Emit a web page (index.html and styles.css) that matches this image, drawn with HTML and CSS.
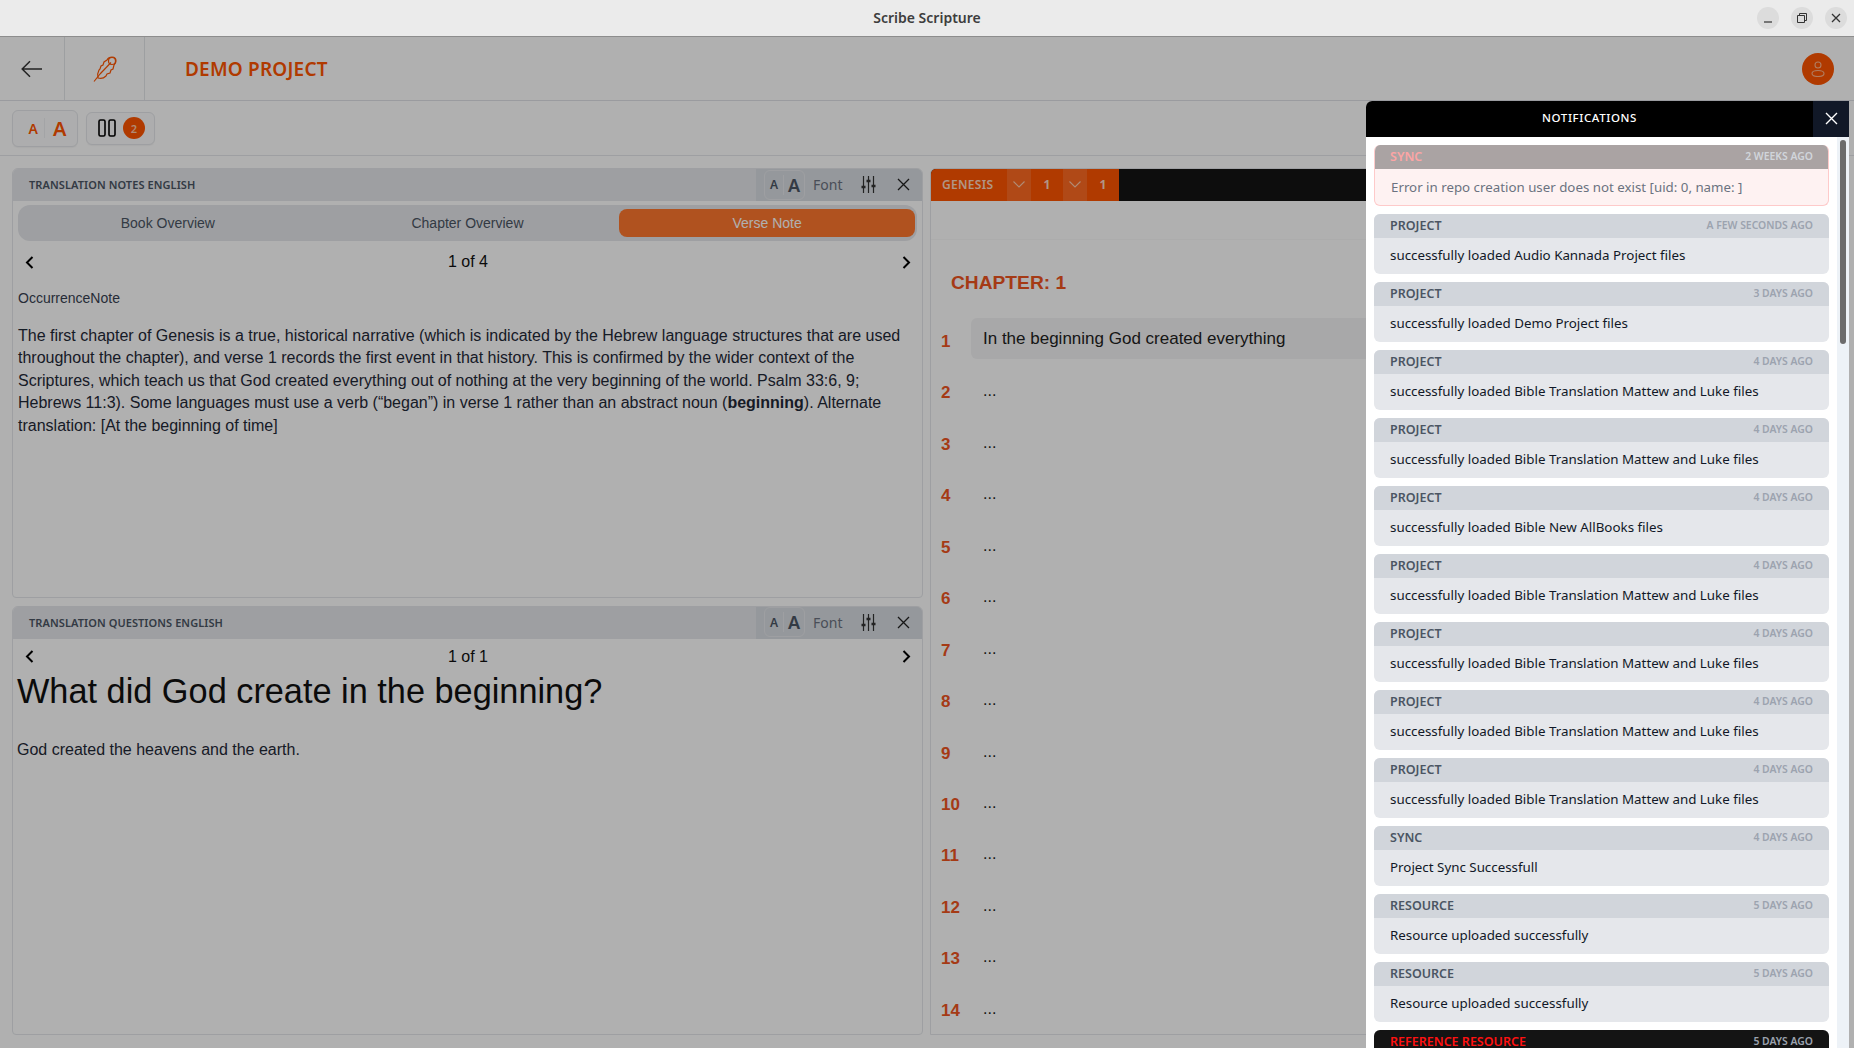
FILE: index.html
```html
<!DOCTYPE html>
<html lang="en">
<head>
<meta charset="utf-8">
<title>Scribe Scripture</title>
<link rel="stylesheet" href="styles.css">
</head>
<body>
<header class="titlebar">
  <span class="titlebar-name">Scribe Scripture</span>
  <div class="winctl">
    <span class="winbtn"><svg width="10" height="10" viewBox="0 0 10 10"><path d="M1 9h8" stroke="#333" stroke-width="1.2"/></svg></span>
    <span class="winbtn"><svg width="10" height="10" viewBox="0 0 10 10" fill="none" stroke="#333"><path d="M.5 2.5h7v7h-7z"/><path d="M2.5 2.5v-2h7v7h-2"/></svg></span>
    <span class="winbtn"><svg width="10" height="10" viewBox="0 0 10 10" stroke="#333" stroke-width="1.3"><path d="M1 1l8 8M9 1l-8 8"/></svg></span>
  </div>
</header>

<div class="app">
  <nav class="appbar">
    <div class="appcell cell-back"><svg width="22" height="18" viewBox="0 0 22 18" fill="none" stroke="#333" stroke-width="1.5"><path d="M21 9H1.5M9 1.2L1.2 9 9 16.8"/></svg></div>
    <div class="appcell cell-logo"><svg width="24" height="26" viewBox="0 0 24 26" fill="none" stroke="#ff5500" stroke-width="1.2"><path d="M1 25.5L7 18"/><path d="M5 21c-1-3 0-5 1-7l1-1 1-3 2-1 1-3 3-2c1-2 3-3 5-3 3 0 4 2 4 4 0 2-1 3-2 4l-1 4-2 1-1 3-3 1-1 2c-2 2-5 3-8 2z"/><path d="M7 18L18 6.500"/><circle cx="19" cy="5" r="3.500"/></svg></div>
    <h1 class="project-title">DEMO PROJECT</h1>
    <span class="avatar"><svg width="14" height="16" viewBox="0 0 14 16" fill="none" stroke="#ffb48a" stroke-width="1.1"><circle cx="7" cy="4" r="3"/><path d="M1 12.500C1 10.500 4 9.500 7 9.500s6 1 6 3-2 3-6 3-6-1-6-3z"/></svg></span>
  </nav>

  <div class="toolbar">
    <div class="tool-box tool-font">
      <span class="a-small">A</span><span class="tool-sep"></span><span class="a-large">A</span>
    </div>
    <div class="tool-box tool-cols">
      <svg width="18" height="18" viewBox="0 0 18 18" fill="none" stroke="#000" stroke-width="1.6"><rect x="1" y="1" width="6" height="16" rx="1.500"/><rect x="11" y="1" width="6" height="16" rx="1.500"/></svg>
      <span class="badge">2</span>
    </div>
  </div>

  <main class="workspace">
    <div class="left-col">
      <section class="panel">
        <div class="panel-head">
          <span class="panel-title">TRANSLATION NOTES ENGLISH</span>
          <div class="panel-tools">
            <span class="aa-box"><span class="aa-s">A</span><span class="aa-sep"></span><span class="aa-l">A</span></span>
            <span class="font-label">Font</span>
            <svg class="sliders" width="15" height="17" viewBox="0 0 15 17" fill="none" stroke="#333" stroke-width="1.200"><path d="M2.500 0v17M7.500 0v17M12.500 0v17"/><path d="M.5 11h4M5.500 5h4M10.500 10h4" stroke-width="2.600"/></svg>
            <svg class="close-x" width="13" height="13" viewBox="0 0 13 13" stroke="#222" stroke-width="1.300"><path d="M1 1l11 11M12 1L1 12"/></svg>
          </div>
        </div>
        <div class="tabs">
          <span class="tab">Book Overview</span>
          <span class="tab">Chapter Overview</span>
          <span class="tab tab-on">Verse Note</span>
        </div>
        <div class="pager">
          <svg width="9" height="13" viewBox="0 0 9 13" fill="none" stroke="#000" stroke-width="2"><path d="M7.500 1L2 6.500 7.500 12"/></svg>
          <span>1 of 4</span>
          <svg width="9" height="13" viewBox="0 0 9 13" fill="none" stroke="#000" stroke-width="2"><path d="M1.500 1L7 6.500 1.500 12"/></svg>
        </div>
        <div class="note-body">
          <p class="note-label">OccurrenceNote</p>
          <p class="note-text">The first chapter of Genesis is a true, historical narrative (which is indicated by the Hebrew language structures that are used throughout the chapter), and verse 1 records the first event in that history. This is confirmed by the wider context of the Scriptures, which teach us that God created everything out of nothing at the very beginning of the world. Psalm 33:6, 9; Hebrews 11:3). Some languages must use a verb (“began”) in verse 1 rather than an abstract noun (<b>beginning</b>). Alternate translation: [At the beginning of time]</p>
        </div>
      </section>
      <section class="panel">
        <div class="panel-head">
          <span class="panel-title">TRANSLATION QUESTIONS ENGLISH</span>
          <div class="panel-tools">
            <span class="aa-box"><span class="aa-s">A</span><span class="aa-sep"></span><span class="aa-l">A</span></span>
            <span class="font-label">Font</span>
            <svg class="sliders" width="15" height="17" viewBox="0 0 15 17" fill="none" stroke="#333" stroke-width="1.200"><path d="M2.500 0v17M7.500 0v17M12.500 0v17"/><path d="M.5 11h4M5.500 5h4M10.500 10h4" stroke-width="2.600"/></svg>
            <svg class="close-x" width="13" height="13" viewBox="0 0 13 13" stroke="#222" stroke-width="1.300"><path d="M1 1l11 11M12 1L1 12"/></svg>
          </div>
        </div>
        <div class="pager pager-q">
          <svg width="9" height="13" viewBox="0 0 9 13" fill="none" stroke="#000" stroke-width="2"><path d="M7.500 1L2 6.500 7.500 12"/></svg>
          <span>1 of 1</span>
          <svg width="9" height="13" viewBox="0 0 9 13" fill="none" stroke="#000" stroke-width="2"><path d="M1.500 1L7 6.500 1.500 12"/></svg>
        </div>
        <h2 class="question">What did God create in the beginning?</h2>
        <p class="answer">God created the heavens and the earth.</p>
      </section>
    </div>

    <section class="editor">
      <div class="editor-head">
        <span class="ref-book">GENESIS</span>
        <span class="ref-drop"><svg width="12" height="7" viewBox="0 0 12 7" fill="none" stroke="#ffc9a8" stroke-width="1.100"><path d="M.5.5L6 6l5.500-5.500"/></svg></span>
        <span class="ref-num">1</span>
        <span class="ref-drop"><svg width="12" height="7" viewBox="0 0 12 7" fill="none" stroke="#ffc9a8" stroke-width="1.100"><path d="M.5.5L6 6l5.500-5.500"/></svg></span>
        <span class="ref-num">1</span>
      </div>
      <div class="editor-sub"></div>
      <div class="chapter">CHAPTER: 1</div>
      <div class="verses">
        <div class="verse verse-on"><b>1</b><span>In the beginning God created everything</span></div>
        <div class="verse"><b>2</b><span>...</span></div>
        <div class="verse"><b>3</b><span>...</span></div>
        <div class="verse"><b>4</b><span>...</span></div>
        <div class="verse"><b>5</b><span>...</span></div>
        <div class="verse"><b>6</b><span>...</span></div>
        <div class="verse"><b>7</b><span>...</span></div>
        <div class="verse"><b>8</b><span>...</span></div>
        <div class="verse"><b>9</b><span>...</span></div>
        <div class="verse"><b>10</b><span>...</span></div>
        <div class="verse"><b>11</b><span>...</span></div>
        <div class="verse"><b>12</b><span>...</span></div>
        <div class="verse"><b>13</b><span>...</span></div>
        <div class="verse"><b>14</b><span>...</span></div>
      </div>
    </section>
  </main>

  <div class="scrim"></div>

  <aside class="notifications">
    <div class="notif-head">
      <span class="notif-title">NOTIFICATIONS</span>
      <span class="notif-close"><svg width="13" height="13" viewBox="0 0 13 13" stroke="#fff" stroke-width="1.400"><path d="M1 1l11 11M12 1L1 12"/></svg></span>
    </div>
    <div class="notif-body">
      <div class="notif-list">
        <article class="notif notif-err"><header><b>SYNC</b><time>2 WEEKS AGO</time></header><p>Error in repo creation user does not exist [uid: 0, name: ]</p></article>
        <article class="notif"><header><b>PROJECT</b><time>A FEW SECONDS AGO</time></header><p>successfully loaded Audio Kannada Project files</p></article>
        <article class="notif"><header><b>PROJECT</b><time>3 DAYS AGO</time></header><p>successfully loaded Demo Project files</p></article>
        <article class="notif"><header><b>PROJECT</b><time>4 DAYS AGO</time></header><p>successfully loaded Bible Translation Mattew and Luke files</p></article>
        <article class="notif"><header><b>PROJECT</b><time>4 DAYS AGO</time></header><p>successfully loaded Bible Translation Mattew and Luke files</p></article>
        <article class="notif"><header><b>PROJECT</b><time>4 DAYS AGO</time></header><p>successfully loaded Bible New AllBooks files</p></article>
        <article class="notif"><header><b>PROJECT</b><time>4 DAYS AGO</time></header><p>successfully loaded Bible Translation Mattew and Luke files</p></article>
        <article class="notif"><header><b>PROJECT</b><time>4 DAYS AGO</time></header><p>successfully loaded Bible Translation Mattew and Luke files</p></article>
        <article class="notif"><header><b>PROJECT</b><time>4 DAYS AGO</time></header><p>successfully loaded Bible Translation Mattew and Luke files</p></article>
        <article class="notif"><header><b>PROJECT</b><time>4 DAYS AGO</time></header><p>successfully loaded Bible Translation Mattew and Luke files</p></article>
        <article class="notif"><header><b>SYNC</b><time>4 DAYS AGO</time></header><p>Project Sync Successfull</p></article>
        <article class="notif"><header><b>RESOURCE</b><time>5 DAYS AGO</time></header><p>Resource uploaded successfully</p></article>
        <article class="notif"><header><b>RESOURCE</b><time>5 DAYS AGO</time></header><p>Resource uploaded successfully</p></article>
        <article class="notif notif-dark"><header><b>REFERENCE RESOURCE</b><time>5 DAYS AGO</time></header><p>Resource uploaded successfully</p></article>
      </div>
      <div class="scroll-track"><span class="scroll-thumb"></span></div>
    </div>
  </aside>
</div>
</body>
</html>
```
FILE: styles.css
```css
* { box-sizing: border-box; }
html, body { margin: 0; height: 100%; overflow: hidden; }
body {
  width: 1854px;
  height: 1048px;
  display: flex;
  flex-direction: column;
  background: #fff;
  font-family: "Liberation Sans", Arial, sans-serif;
  color: #111;
}
b { font-weight: 700; }
p, h1, h2 { margin: 0; }

.titlebar {
  flex: 0 0 37px;
  display: flex;
  align-items: center;
  justify-content: center;
  position: relative;
  background: #ebebeb;
  border-bottom: 1px solid #8d8d8d;
  padding-bottom: 2px;
}
.titlebar-name { font: 600 14px "Noto Sans", sans-serif; color: #3d3d3d; }
.winctl { position: absolute; right: 7px; top: 7px; display: flex; gap: 12px; }
.winbtn { width: 22px; height: 22px; border-radius: 50%; background: #dcdcdc; display: flex; align-items: center; justify-content: center; }

.app { flex: 1; position: relative; display: flex; flex-direction: column; min-height: 0; overflow: hidden; font-family: "Noto Sans", sans-serif; }

.appbar { flex: 0 0 64px; display: flex; align-items: center; border-bottom: 1px solid #dfe1e6; padding-right: 20px; }
.appcell { height: 100%; display: flex; align-items: center; justify-content: center; border-right: 1px solid #e4e6ea; }
.cell-back { width: 65px; }
.cell-logo { width: 80px; }
.project-title { margin-left: 40px; font: 600 19px "Noto Sans", sans-serif; letter-spacing: .2px; color: #ff5500; flex: 1; }
.avatar { width: 32px; height: 32px; border-radius: 50%; background: #ff5500; display: flex; align-items: center; justify-content: center; }

.toolbar { flex: 0 0 55px; display: flex; align-items: center; gap: 8px; padding: 0 12px; border-bottom: 1px solid #e5e7eb; }
.tool-box { display: flex; align-items: center; border: 1px solid #e5e7eb; background: #fbfbfc; border-radius: 6px; box-shadow: 0 1px 1px rgba(0,0,0,.04); }
.tool-font { width: 66px; height: 37px; justify-content: center; padding-left: 5px; color: #ff5500; font-weight: 600; }
.a-small { font-size: 14px; }
.a-large { font-size: 20px; }
.tool-sep { width: 1px; height: 20px; background: #eceef1; margin: 0 8px 0 6px; }
.tool-cols { width: 69px; height: 33px; padding-left: 11px; gap: 7px; }
.badge { width: 22px; height: 22px; border-radius: 50%; background: #ff5500; color: #ffc9a8; font-size: 11px; font-weight: 600; display: flex; align-items: center; justify-content: center; }

.workspace { flex: 1; min-height: 0; display: flex; gap: 7px; padding: 12px 5px 13px 12px; }
.left-col { flex: 0 0 911px; display: flex; flex-direction: column; gap: 8px; }
.panel { flex: 1; min-height: 0; border: 1px solid #e5e7eb; border-radius: 6px 6px 4px 4px; display: flex; flex-direction: column; background: #fff; overflow: hidden; }
.panel-head { flex: 0 0 33px; display: flex; align-items: center; justify-content: space-between; background: #e5e7eb; padding-left: 17px; margin: -1px -1px 0; }
.panel-title { font: 600 11px "Noto Sans", sans-serif; color: #4b5563; letter-spacing: .08px; }
.panel-tools { width: 167px; height: 100%; background: #d8dce2; display: flex; align-items: center; padding-left: 8px; }
.aa-box { width: 41px; height: 30px; padding-left: 1px; border: 1px solid #e5e7eb; border-radius: 6px; display: flex; align-items: center; justify-content: center; color: #4b5563; font-weight: 600; }
.aa-s { font-size: 12px; }
.aa-l { font-size: 18px; }
.aa-sep { width: 1px; height: 20px; background: #e5e7eb; margin: 0 4px 0 5px; }
.font-label { font-size: 14px; color: #6b7280; margin-left: 8px; width: 48px; }
.close-x { margin-left: 21px; }

.tabs { flex: 0 0 36px; margin: 4px 5px 0 5px; display: grid; grid-template-columns: repeat(3, 1fr); padding: 4px 0; background: #e5e7eb; border-radius: 12px; font-size: 14px; }
.tab { display: flex; align-items: center; justify-content: center; color: #4b5563; font-family: "Liberation Sans", sans-serif; }
.tab-on { margin: 0 2px; background: #ff782d; color: #fff; border-radius: 8px; }
.pager { display: flex; align-items: center; justify-content: space-between; padding: 12px 11px 0 12px; font: 16px "Liberation Sans", sans-serif; color: #111; }
.note-body { padding: 17px 5px 0 5px; font-family: "Liberation Sans", sans-serif; }
.note-label { font-size: 14px; line-height: 20px; color: #374151; margin-bottom: 17px; }
.note-text { font-size: 16px; line-height: 22.4px; color: #1f2937; width: 895px; }
.pager-q { padding-top: 9px; }
.question { font: 400 34.3px/40px "Liberation Sans", sans-serif; padding: 5px 4px 0; color: #111; }
.answer { font: 16px/24px "Liberation Sans", sans-serif; padding: 27px 4px 0; color: #1f2937; }

.editor { flex: 1; display: flex; flex-direction: column; border: 1px solid #e5e7eb; border-radius: 6px 6px 0 0; overflow: hidden; font-family: "Liberation Sans", sans-serif; min-width: 0; }
.editor-head { flex: 0 0 33px; display: flex; background: #141414; margin: -1px -1px 0; align-items: stretch; font: 600 12px "Noto Sans", sans-serif; color: #ffd9c2; }
.ref-book { width: 77px; padding-left: 12px; background: #ff5500; display: flex; align-items: center; letter-spacing: .3px; }
.ref-drop { width: 24px; background: #ff6a22; display: flex; align-items: center; justify-content: center; }
.ref-num { width: 32px; background: #ff5500; display: flex; align-items: center; justify-content: center; font-weight: 700; }
.editor-sub { flex: 0 0 39px; border-bottom: 1px solid #f9f9fa; background: #fff; }
.chapter { flex: 0 0 auto; padding: 31px 0 0 20px; font-size: 19.2px; line-height: 24px; font-weight: 700; color: #f0551f; }
.verses { padding: 23px 0 0 10px; }
.verse { height: 51.44px; display: flex; align-items: flex-start; font-size: 16px; color: #222; }
.verse b { width: 30px; padding-top: 15px; color: #f0551f; font-size: 17px; line-height: 18px; }
.verse span { padding: 9px 12px; line-height: 23px; }
.verse-on span { background: #f4f4f5; border-radius: 6px; font-size: 17px; flex: 1; height: 41px; }
.verses .verse:not(.verse-on) span { padding-top: 3px; line-height: 22px; }
.verses .verse:not(.verse-on) b { padding-top: 7px; }
.verses .verse:not(.verse-on) { padding-top: 8px; }

.scrim { position: absolute; inset: 0; background: rgba(0,0,0,.31); }

.notifications { position: absolute; left: 1366px; top: 64px; width: 483px; bottom: 0; background: #fff; display: flex; flex-direction: column; border-radius: 6px 0 0 0; overflow: hidden; }
.notif-head { flex: 0 0 36px; background: #000; display: flex; align-items: center; justify-content: flex-end; position: relative; }
.notif-title { position: absolute; left: 0; right: 36px; top: 9px; text-align: center; font: 500 11.5px "Noto Sans", sans-serif; color: #fff; letter-spacing: .6px; }
.notif-close { width: 36px; height: 36px; background: #111827; display: flex; align-items: center; justify-content: center; padding-bottom: 2px; }
.notif-body { flex: 1; min-height: 0; display: flex; }
.notif-list { flex: 1; padding: 8px 8px 0; display: flex; flex-direction: column; gap: 8px; overflow: hidden; }
.notif { flex: 0 0 60px; border-radius: 6px; overflow: hidden; background: #e5e7eb; }
.notif header { height: 24px; display: flex; align-items: center; justify-content: space-between; padding: 0 16px 2px; background: #d1d5db; font-family: "Noto Sans", sans-serif; }
.notif header b { font-size: 12.5px; font-weight: 600; color: #4b5563; }
.notif time { font-size: 10.400px; font-weight: 600; color: #9ca3af; }
.notif p { padding: 0 16px; height: 36px; line-height: 34px; font-size: 13.350px; color: #111827; }
.notif-err { flex-basis: 61px; background: #fef2f2; border: 1px solid #fecaca; border-top: 0; }
.notif-err header { background: #aaa3a3; margin: 0 -1px; }
.notif-err header b { color: #fca5a5; }
.notif-err time { color: #d1d5db; }
.notif-err p { color: #6b7280; line-height: 36px; font-size: 13.300px; }
.notif-dark header { background: #141414; }
.notif-dark header b { color: #f11; }
.notif-dark time { color: #9ca3af; }
.scroll-track { flex: 0 0 12px; background: #edf2f7; padding: 3px; }
.scroll-thumb { display: block; width: 6px; height: 204px; background: #6b6b6b; border-radius: 3px; }
```
